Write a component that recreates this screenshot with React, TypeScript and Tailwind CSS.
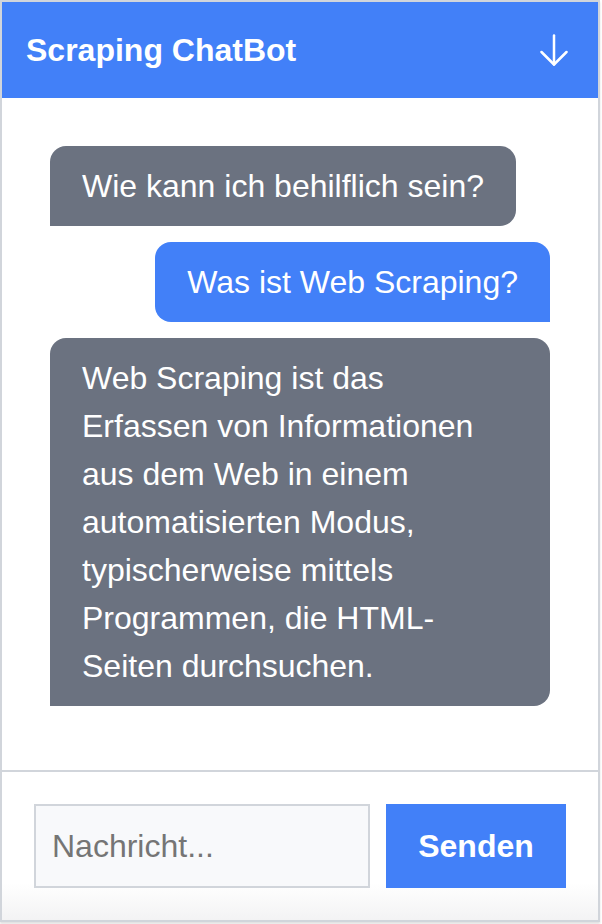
import { useState } from "react";

type Message = {
  from: "bot" | "user";
  text: string;
};

const messages: Message[] = [
  { from: "bot", text: "Wie kann ich behilflich sein?" },
  { from: "user", text: "Was ist Web Scraping?" },
  {
    from: "bot",
    text: "Web Scraping ist das Erfassen von Informationen aus dem Web in einem automatisierten Modus, typischerweise mittels Programmen, die HTML-Seiten durchsuchen.",
  },
];

const ArrowDown = () => (
  <svg width="28" height="32" viewBox="0 0 28 32" fill="none" stroke="white" strokeWidth="2.5" strokeLinecap="round" strokeLinejoin="round">
    <path d="M14 1.5V30.5" />
    <path d="M1.5 18L14 30.5L26.5 18" />
  </svg>
);

export default function App() {
  const [draft, setDraft] = useState("");

  return (
    <div className="w-[602px] h-[924px] bg-white font-['Liberation_Sans',Arial,sans-serif]">
      <div className="flex h-[922px] w-[600px] flex-col border-2 border-[#d1d5db] bg-white shadow-[0_2px_2px_rgba(0,0,0,0.12)]">
        <header className="flex h-24 shrink-0 items-center justify-between bg-[#4280f8] pl-6 pr-[30px]">
          <h1 className="text-[32px] font-bold leading-[48px] text-white">Scraping ChatBot</h1>
          <button type="button" aria-label="Minimieren">
            <ArrowDown />
          </button>
        </header>

        <div className="flex flex-1 flex-col gap-4 overflow-y-auto p-12">
          {messages.map((m, i) => (
            <div
              key={i}
              className={
                m.from === "bot"
                  ? "w-fit self-start rounded-t-2xl rounded-br-2xl bg-[#6b7280] px-8 py-4 text-[32px] leading-[48px] text-white"
                  : "w-fit self-end rounded-t-2xl rounded-bl-2xl bg-[#4280f8] px-8 py-4 text-[32px] leading-[48px] text-white"
              }
            >
              {m.text}
            </div>
          ))}
        </div>

        <div className="flex shrink-0 gap-4 border-t-2 border-[#d1d5db] bg-linear-to-b from-white from-75% to-[#f3f3f4] p-8">
          <input
            value={draft}
            onChange={(e) => setDraft(e.target.value)}
            placeholder="Nachricht..."
            className="h-[84px] w-[336px] border-2 border-[#d1d5db] bg-[#f8f9fb] px-4 text-[32px] text-gray-800 outline-none placeholder:text-[#757575]"
          />
          <button type="button" className="h-[84px] flex-1 bg-[#4280f8] text-[32px] font-bold text-white">
            Senden
          </button>
        </div>
      </div>
    </div>
  );
}
